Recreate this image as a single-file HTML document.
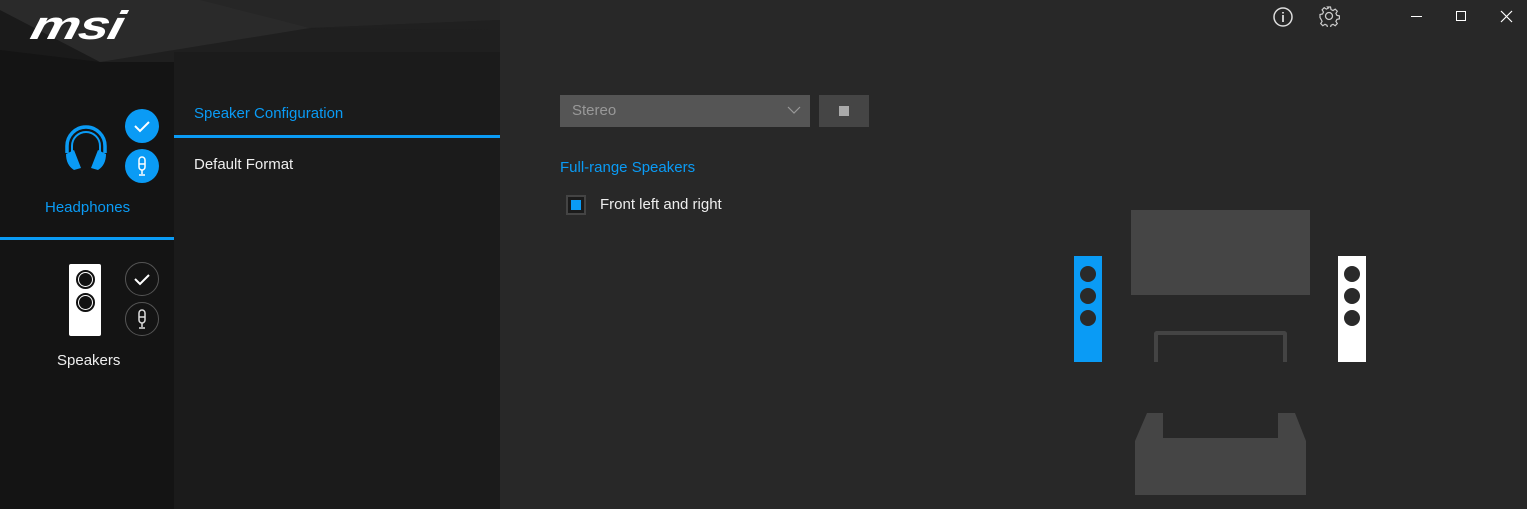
<!DOCTYPE html>
<html><head><meta charset="utf-8"><style>
*{margin:0;padding:0;box-sizing:border-box}
body{width:1527px;height:509px;background:#282828;font-family:"Liberation Sans",sans-serif;position:relative;overflow:hidden}
.a{position:absolute}
</style></head><body>
<div class="a" style="left:0;top:0;width:500px;height:509px;background:#1b1b1b"></div>
<div class="a" style="left:0;top:0;width:174px;height:509px;background:#141414"></div>
<svg class="a" style="left:0;top:0" width="500" height="62">
<polygon points="0,0 500,0 500,52 174,52 174,62 100,62 0,40" fill="#1f1f1f"/>
<polygon points="0,0 210,0 310,28 100,62 0,40" fill="#2a2a2a"/>
<polygon points="0,10 100,62 0,50" fill="#1a1a1a"/>
<polygon points="200,0 500,0 500,20 310,28" fill="#262626"/>
<polygon points="310,28 500,20 500,30" fill="#202020"/>
</svg>
<div class="a" style="left:27px;top:6px;color:#fff;font-size:40px;line-height:1;font-weight:bold;font-style:italic;letter-spacing:-1px;transform:scaleX(1.38) skewX(-10deg);transform-origin:left bottom">msi</div>
<!-- headphone -->
<svg class="a" style="left:63px;top:123px" width="46" height="48" viewBox="0 0 46 48">
<path d="M4 30 V23 A19 19 0 0 1 42 23 V30" fill="none" stroke="#0a9bf5" stroke-width="3.5"/>
<path d="M9 30 V23 A14 14 0 0 1 37 23 V30" fill="none" stroke="#0a9bf5" stroke-width="2"/>
<path d="M3 31 L11 27 L18 45 L11 47 Q3 42 3 31 Z M43 31 L35 27 L28 45 L35 47 Q43 42 43 31 Z" fill="#0a9bf5"/>
</svg>
<div class="a" style="left:125px;top:109px;width:34px;height:34px;border-radius:50%;background:#0a9bf5"></div>
<svg class="a" style="left:125px;top:109px" width="34" height="34"><path d="M10 17 L15 22 L24 13" fill="none" stroke="#fff" stroke-width="2"/></svg>
<div class="a" style="left:125px;top:149px;width:34px;height:34px;border-radius:50%;background:#0a9bf5"></div>
<svg class="a" style="left:125px;top:149px" width="34" height="34"><rect x="14" y="8" width="6" height="13" rx="3" fill="none" stroke="#fff" stroke-width="1.5"/><path d="M14 15h6M17 21v4M14 26h6" stroke="#fff" stroke-width="1.5"/></svg>
<div class="a" style="left:45px;top:199px;color:#0a9bf5;font-size:15px">Headphones</div>
<div class="a" style="left:0;top:237px;width:174px;height:3px;background:#0a9bf5"></div>
<!-- speaker -->
<div class="a" style="left:69px;top:264px;width:32px;height:72px;background:#fff;border-radius:2px"></div>
<div class="a" style="left:76px;top:270px;width:19px;height:19px;border-radius:50%;border:2px solid #111;background:#fff"></div>
<div class="a" style="left:79px;top:273px;width:13px;height:13px;border-radius:50%;background:#111"></div>
<div class="a" style="left:76px;top:293px;width:19px;height:19px;border-radius:50%;border:2px solid #111;background:#fff"></div>
<div class="a" style="left:79px;top:296px;width:13px;height:13px;border-radius:50%;background:#111"></div>
<div class="a" style="left:125px;top:262px;width:34px;height:34px;border-radius:50%;border:1.5px solid #555"></div>
<svg class="a" style="left:125px;top:262px" width="34" height="34"><path d="M10 17 L15 22 L24 13" fill="none" stroke="#fff" stroke-width="2"/></svg>
<div class="a" style="left:125px;top:302px;width:34px;height:34px;border-radius:50%;border:1.5px solid #555"></div>
<svg class="a" style="left:125px;top:302px" width="34" height="34"><rect x="14" y="8" width="6" height="13" rx="3" fill="none" stroke="#ddd" stroke-width="1.5"/><path d="M14 15h6M17 21v4M14 26h6" stroke="#ddd" stroke-width="1.5"/></svg>
<div class="a" style="left:57px;top:352px;color:#eee;font-size:15px">Speakers</div>
<!-- middle menu -->
<div class="a" style="left:194px;top:105px;color:#0a9bf5;font-size:15px">Speaker Configuration</div>
<div class="a" style="left:174px;top:135px;width:326px;height:3px;background:#0a9bf5"></div>
<div class="a" style="left:194px;top:156px;color:#eee;font-size:15px">Default Format</div>
<!-- title icons -->
<svg class="a" style="left:1272px;top:6px" width="22" height="22"><circle cx="11" cy="11" r="9" fill="none" stroke="#ddd" stroke-width="1.5"/><path d="M11 9v7M11 6v1.5" stroke="#ddd" stroke-width="1.8"/></svg>
<svg class="a" style="left:1318px;top:5px" width="22" height="22" viewBox="0 0 22 22"><circle cx="11" cy="11" r="3.5" fill="none" stroke="#ccc" stroke-width="1.3"/><path d="M9.5 2h3l.5 2.5 2 1 2.2-1.4 2.1 2.1-1.4 2.2 1 2 2.5.5v3l-2.5.5-1 2 1.4 2.2-2.1 2.1-2.2-1.4-2 1-.5 2.5h-3l-.5-2.5-2-1-2.2 1.4-2.1-2.1 1.4-2.2-1-2L2 12.5v-3l2.5-.5 1-2-1.4-2.2 2.1-2.1 2.2 1.4 2-1z" fill="none" stroke="#ccc" stroke-width="1.2"/></svg>
<div class="a" style="left:1411px;top:16px;width:11px;height:1px;background:#fff"></div>
<div class="a" style="left:1456px;top:11px;width:10px;height:10px;border:1px solid #fff"></div>
<svg class="a" style="left:1500px;top:10px" width="13" height="13"><path d="M1 1L12 12M12 1L1 12" stroke="#fff" stroke-width="1.2"/></svg>
<!-- controls -->
<div class="a" style="left:560px;top:95px;width:250px;height:32px;background:#555"></div>
<div class="a" style="left:572px;top:102px;color:#999;font-size:15px">Stereo</div>
<svg class="a" style="left:786px;top:105px" width="16" height="10"><path d="M2 2L8 8L14 2" fill="none" stroke="#999" stroke-width="1.2"/></svg>
<div class="a" style="left:819px;top:95px;width:50px;height:32px;background:#454545"></div>
<div class="a" style="left:839px;top:106px;width:10px;height:10px;background:#aaa"></div>
<div class="a" style="left:560px;top:159px;color:#0a9bf5;font-size:15px">Full-range Speakers</div>
<div class="a" style="left:566px;top:195px;width:20px;height:20px;border:2px solid #444;background:#1b1b1b"></div>
<div class="a" style="left:571px;top:200px;width:10px;height:10px;background:#0a9bf5"></div>
<div class="a" style="left:600px;top:196px;color:#eee;font-size:15px">Front left and right</div>
<!-- diagram -->
<div class="a" style="left:1131px;top:210px;width:179px;height:85px;background:#454545"></div>
<div class="a" style="left:1074px;top:256px;width:28px;height:106px;background:#0a9bf5"></div>
<div class="a" style="left:1338px;top:256px;width:28px;height:106px;background:#fff"></div>
<div class="a" style="left:1080px;top:266px;width:16px;height:16px;border-radius:50%;background:#2a2a2a"></div>
<div class="a" style="left:1080px;top:288px;width:16px;height:16px;border-radius:50%;background:#2a2a2a"></div>
<div class="a" style="left:1080px;top:310px;width:16px;height:16px;border-radius:50%;background:#2a2a2a"></div>
<div class="a" style="left:1344px;top:266px;width:16px;height:16px;border-radius:50%;background:#2a2a2a"></div>
<div class="a" style="left:1344px;top:288px;width:16px;height:16px;border-radius:50%;background:#2a2a2a"></div>
<div class="a" style="left:1344px;top:310px;width:16px;height:16px;border-radius:50%;background:#2a2a2a"></div>
<div class="a" style="left:1154px;top:331px;width:133px;height:31px;border:4px solid #444;border-bottom:none;border-radius:3px 3px 0 0"></div>
<svg class="a" style="left:1135px;top:413px" width="172" height="82"><path d="M12 0H28V25H143V0H160L171 28V82H0V28Z" fill="#454545"/></svg>
</body></html>
